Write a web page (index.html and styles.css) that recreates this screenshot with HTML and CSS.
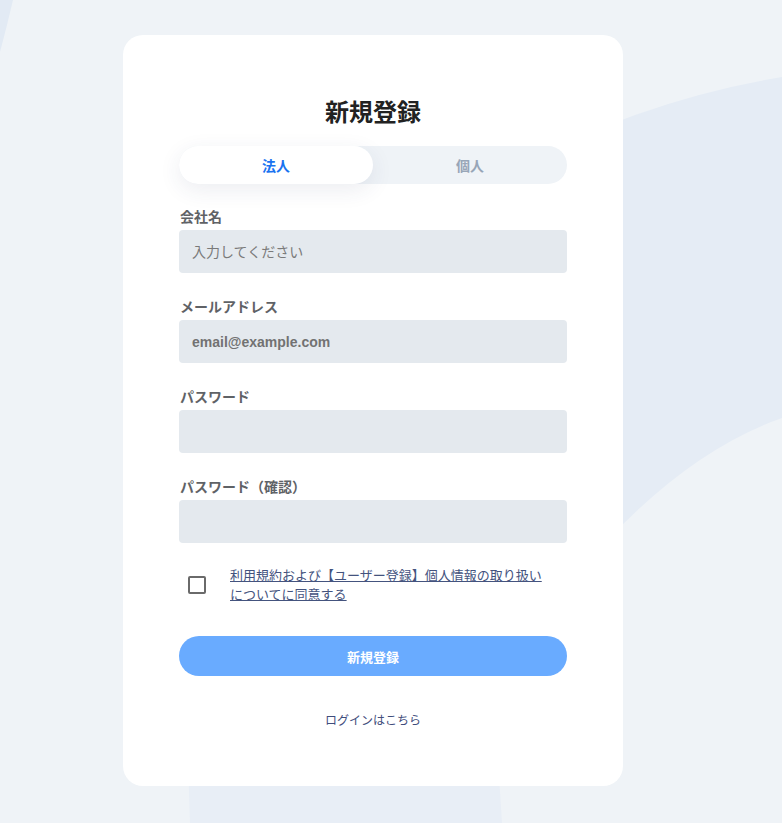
FILE: index.html
```html
<!DOCTYPE html>
<html lang="ja">
<head>
  <meta charset="UTF-8">
  <title>新規登録</title>
  <link rel="stylesheet" href="styles.css">
</head>
<body>
  <svg class="bg-shapes" width="782" height="823" viewBox="0 0 782 823" aria-hidden="true">
    <path d="M0 0 L13 0 Q7 26 0 52 Z" fill="#e2eaf4" />
    <path d="M500 175 Q640 100 782 77 L782 418 Q690 450 600 548 L500 600 Z" fill="#e5ecf5" />
    <path d="M188 760 L498 760 L502 823 L190 823 Z" fill="#e8eef6" />
  </svg>

  <div class="card">
    <h1>新規登録</h1>

    <div class="tabs">
      <button class="tab active">法人</button>
      <button class="tab">個人</button>
    </div>

    <div class="field">
      <label for="company">会社名</label>
      <input type="text" id="company" placeholder="入力してください">
    </div>

    <div class="field">
      <label for="email">メールアドレス</label>
      <input type="email" id="email" class="bold-ph" placeholder="email@example.com">
    </div>

    <div class="field">
      <label for="password">パスワード</label>
      <input type="password" id="password">
    </div>

    <div class="field">
      <label for="password2">パスワード（確認）</label>
      <input type="password" id="password2">
    </div>

    <div class="agree">
      <input type="checkbox" id="agree" class="check">
      <a href="#" class="agree-text">利用規約および【ユーザー登録】個人情報の取り扱いについてに同意する</a>
    </div>

    <button class="submit">新規登録</button>

    <a href="#" class="login">ログインはこちら</a>
  </div>
</body>
</html>
```

FILE: styles.css
```css
html, body {
  margin: 0;
  padding: 0;
}
body {
  font-family: "Liberation Sans", "Noto Sans CJK JP", sans-serif;
  background-color: #eff3f7;
  color: #333;
  height: 823px;
  overflow: hidden;
  position: relative;
}
.bg-shapes {
  position: absolute;
  left: 0;
  top: 0;
  z-index: 0;
}
.card {
  position: relative;
  z-index: 1;
  box-sizing: border-box;
  width: 500px;
  height: 751px;
  margin: 35px 0 0 123px;
  padding: 62px 56px 0;
  background: #ffffff;
  border-radius: 20px;
  display: flex;
  flex-direction: column;
}
h1 {
  margin: 0 0 17px;
  font-size: 24px;
  line-height: 32px;
  font-weight: bold;
  color: #222;
  text-align: center;
}
.tabs {
  display: flex;
  height: 38px;
  background: #eff3f7;
  border-radius: 19px;
  margin-bottom: 20px;
}
.tab {
  flex: 1;
  border: none;
  background: transparent;
  border-radius: 19px;
  font-family: inherit;
  font-size: 14px;
  font-weight: bold;
  color: #98a6b8;
  cursor: pointer;
}
.tab.active {
  background: #ffffff;
  color: #1a73f0;
  box-shadow: 0 6px 22px rgba(40, 60, 100, 0.09);
}
.field {
  display: flex;
  flex-direction: column;
  margin-bottom: 21px;
}
.field label {
  font-size: 14px;
  line-height: 24px;
  font-weight: bold;
  color: #5f6266;
  margin: 1px 0 1px 1px;
}
.field input {
  box-sizing: border-box;
  height: 43px;
  border: none;
  border-radius: 4px;
  background: #e4e9ee;
  padding: 0 13px;
  font-family: inherit;
  font-size: 14px;
  color: #333;
  outline: none;
}
.field input::placeholder {
  color: #7a7a7a;
}
.field input.bold-ph::placeholder {
  font-weight: bold;
  color: #727272;
}
.agree {
  display: flex;
  align-items: center;
  margin-top: 2px;
  padding-left: 9px;
}
.check {
  appearance: none;
  -webkit-appearance: none;
  box-sizing: border-box;
  width: 18px;
  height: 18px;
  margin: 0 24px 0 0;
  border: 2px solid #6a6a6a;
  border-radius: 2px;
  background: #fff;
  flex-shrink: 0;
}
.agree-text {
  width: 320px;
  font-size: 13px;
  line-height: 19px;
  color: #44537e;
  text-decoration: underline;
}
.submit {
  margin-top: 32px;
  height: 40px;
  border: none;
  border-radius: 20px;
  background: #69abff;
  color: #ffffff;
  font-family: inherit;
  font-size: 13px;
  font-weight: bold;
  cursor: pointer;
}
.login {
  margin-top: 36px;
  align-self: center;
  font-size: 12px;
  line-height: 18px;
  color: #3f4d7c;
  text-decoration: none;
}
```
